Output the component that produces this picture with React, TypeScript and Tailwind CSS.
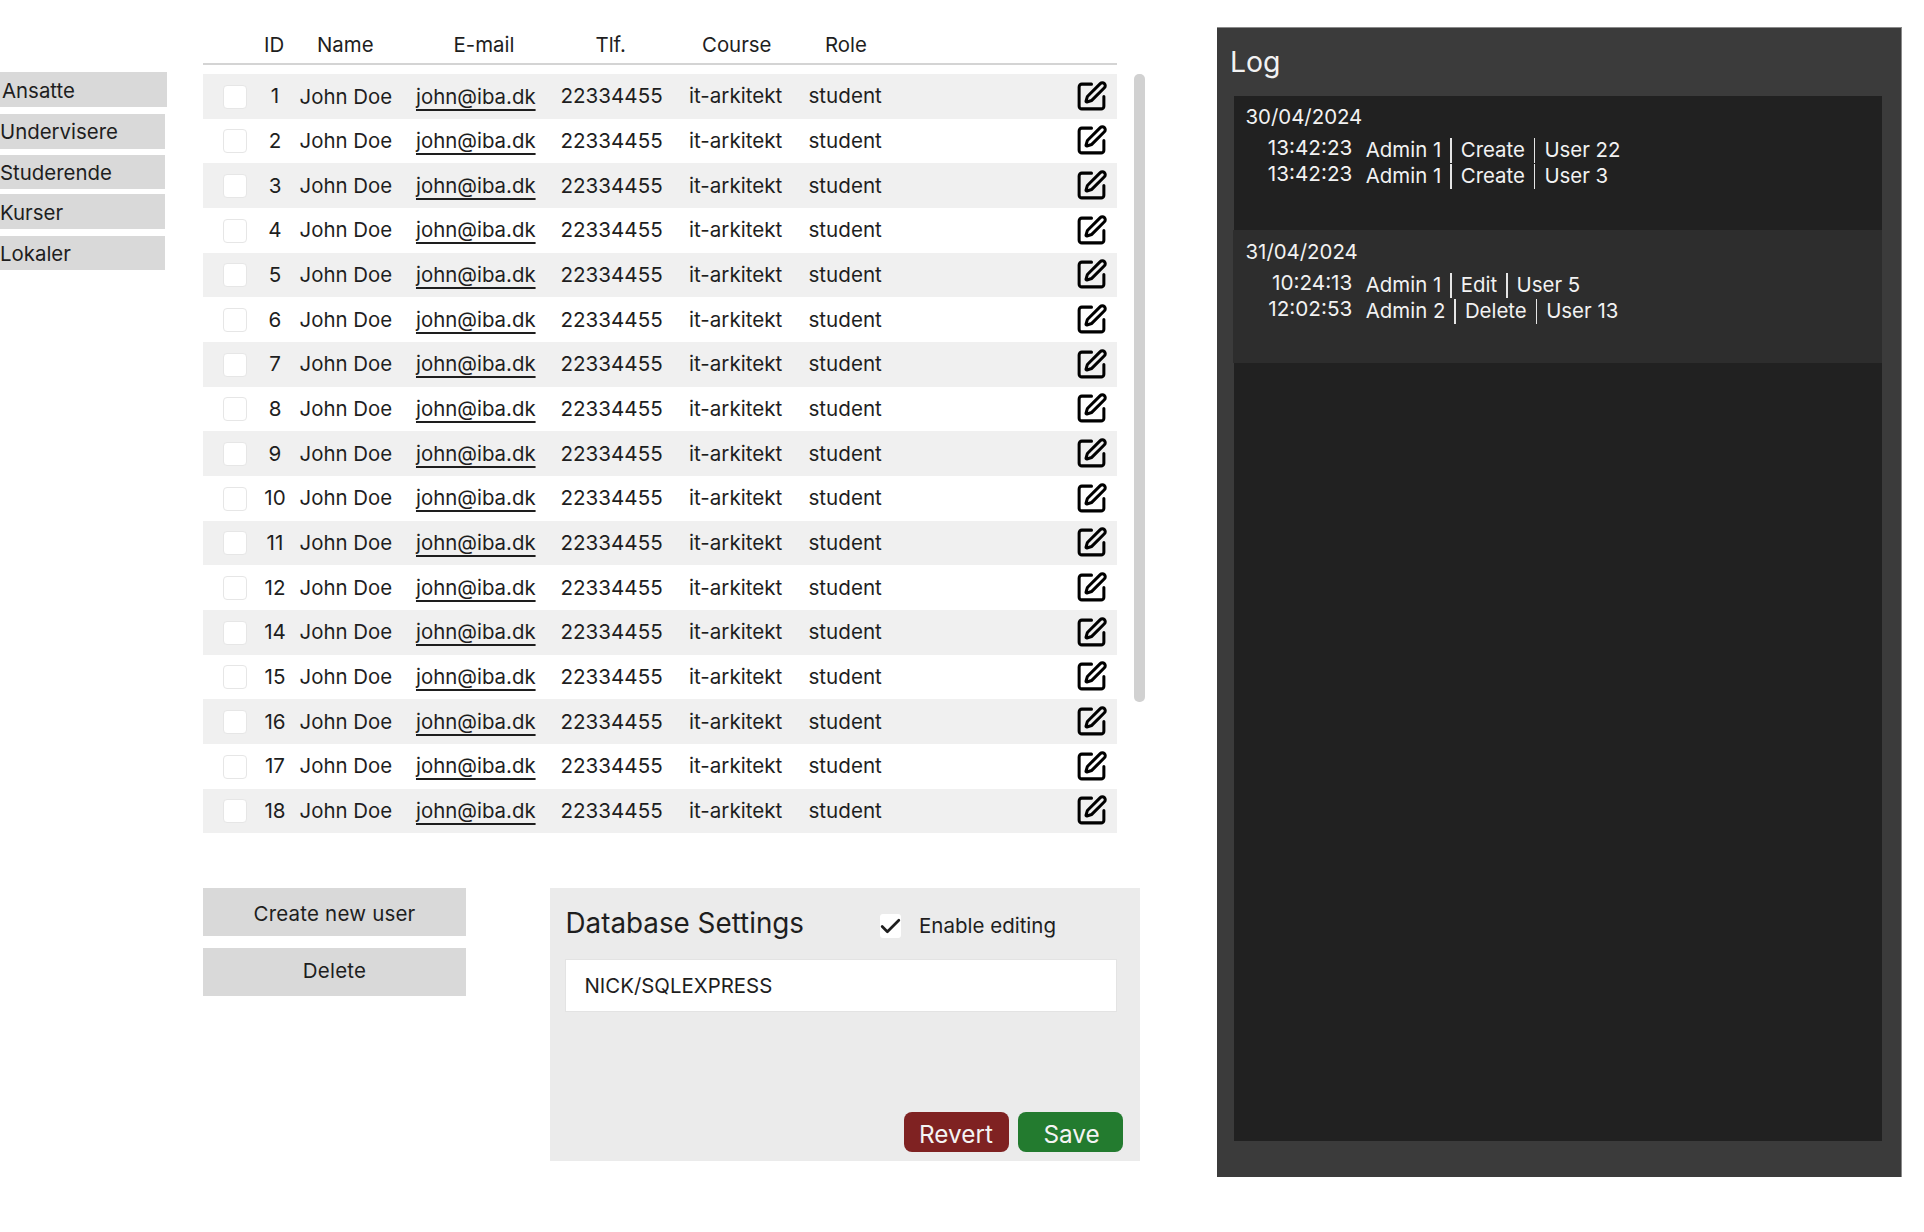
import { Check, SquarePen } from 'lucide-react';

const ids = [1, 2, 3, 4, 5, 6, 7, 8, 9, 10, 11, 12, 14, 15, 16, 17, 18];

const navItems = [
  { label: 'Ansatte', cls: 'w-[166.5px] h-[35px] mb-[6.5px] pl-[2px]' },
  { label: 'Undervisere', cls: 'w-[165px] h-[35px] mb-[6.5px]' },
  { label: 'Studerende', cls: 'w-[165px] h-[34px] mb-[5px]' },
  { label: 'Kurser', cls: 'w-[165px] h-[35px] mb-[7px]' },
  { label: 'Lokaler', cls: 'w-[165px] h-[34px]' },
];

const logGroups = [
  {
    date: '30/04/2024',
    bg: 'bg-[#212121] h-[134px] pl-[11.5px] pt-[7px]',
    rows: [
      { time: '13:42:23', who: 'Admin 1', action: 'Create', target: 'User 22' },
      { time: '13:42:23', who: 'Admin 1', action: 'Create', target: 'User 3' },
    ],
  },
  {
    date: '31/04/2024',
    bg: 'bg-[#2d2d2d] h-[133px] -ml-[1.5px] pl-[13px] pt-[8px]',
    rows: [
      { time: '10:24:13', who: 'Admin 1', action: 'Edit', target: 'User 5' },
      { time: '12:02:53', who: 'Admin 2', action: 'Delete', target: 'User 13' },
    ],
  },
];

function UserRow({ id, odd }: { id: number; odd: boolean }) {
  return (
    <div
      className={`grid h-[44.67px] grid-cols-[52px_44.6px_116.4px_145px_128px_120px_1fr] items-center text-[20.6px] text-[#1e1e1e] ${
        odd ? 'bg-[#f0f0f0]' : 'bg-white'
      }`}
    >
      <div className="pl-[20px]">
        <div className="mt-[1px] h-[24px] w-[24px] rounded-[4px] border border-[#e6e6e6] bg-white" />
      </div>
      <div className="pr-[4.6px] pt-[1px] text-center">{id}</div>
      <div className="pt-[1px] text-[20.4px]">John Doe</div>
      <div className="pt-[1px] text-[20.4px]">
        <span className="underline decoration-[1.5px] underline-offset-[5px] [text-decoration-skip-ink:none]">
          john@iba.dk
        </span>
      </div>
      <div className="-ml-[0.5px] pt-[1px]">22334455</div>
      <div className="pt-[1px]">it-arkitekt</div>
      <div className="flex items-center justify-between">
        <span className="-ml-[0.5px] pt-[1px]">student</span>
        <SquarePen size={33} strokeWidth={2.2} className="mr-[9px] text-black" />
      </div>
    </div>
  );
}

function LogRow({ time, who, action, target }: { time: string; who: string; action: string; target: string }) {
  return (
    <div className="flex h-[26px] items-center text-[20.4px] leading-none text-[#f2f2f2]">
      <span className="mb-[4px] w-[106.8px] text-right text-[20.7px]">{time}</span>
      <span className="ml-[13.5px]">{who}</span>
      <span className="mx-[9px] h-[25px] w-[1.5px] bg-[#e5e5e5]" />
      <span>{action}</span>
      <span className="mx-[9px] h-[25px] w-[1.5px] bg-[#e5e5e5]" />
      <span>{target}</span>
    </div>
  );
}

export default function App() {
  return (
    <div className="flex h-[1232px] w-[1924px] items-start bg-white font-['Inter',sans-serif]">
      {/* Sidebar */}
      <nav className="mt-[72px] w-[203px] shrink-0">
        {navItems.map((item) => (
          <div
            key={item.label}
            className={`flex items-center bg-[#d9d9d9] pt-[3px] text-[20.4px] text-[#1e1e1e] ${item.cls}`}
          >
            {item.label}
          </div>
        ))}
      </nav>

      {/* Main */}
      <main className="w-[950px] shrink-0">
        <div className="h-[65px] w-[914.4px] border-b-2 border-[#d4d4d4] text-[20.4px] text-[#1e1e1e]">
          <div className="grid grid-cols-[53px_136.5px_142px_106.5px_123px_1fr] pl-[61px] pt-[31px] leading-[28px]">
            <span>ID</span>
            <span>Name</span>
            <span>E-mail</span>
            <span>Tlf.</span>
            <span>Course</span>
            <span>Role</span>
          </div>
        </div>

        {/* User list + scrollbar */}
        <div className="mt-[9px] flex items-start">
          <div className="w-[914.4px] shrink-0">
            {ids.map((id, i) => (
              <UserRow key={id} id={id} odd={i % 2 === 0} />
            ))}
          </div>
          <div className="ml-[17px] h-[628px] w-[10.5px] shrink-0 rounded-[5px] bg-[#d1d1d1]" />
        </div>

        {/* Actions and settings */}
        <div className="mt-[55px] flex items-start">
          <div className="w-[347px] shrink-0">
            <button className="block h-[48px] w-[263px] bg-[#d9d9d9] pt-[5px] text-[20.5px] tracking-[0.2px] text-[#1e1e1e]">
              Create new user
            </button>
            <button className="mt-[12px] block h-[48px] w-[263px] bg-[#d9d9d9] pb-[1px] text-[20.5px] tracking-[0.2px] text-[#1e1e1e]">
              Delete
            </button>
          </div>

          <section className="flex h-[273px] w-[590px] flex-col bg-[#ebebeb] pl-[15px] pr-[17px] text-[#1e1e1e]">
            <div className="flex h-[71px] items-center">
              <h2 className="w-[315px] pl-[0.5px] text-[27.8px] font-normal">Database Settings</h2>
              <div className="mt-[5px] flex h-[24px] w-[21px] items-center justify-center rounded-[3px] bg-white">
                <Check size={25} strokeWidth={2.6} className="shrink-0 text-[#1e1e1e]" />
              </div>
              <span className="ml-[18px] pt-[5px] text-[20.5px]">Enable editing</span>
            </div>
            <div className="flex h-[53px] w-[552px] items-center border border-[#e3e3e3] bg-white pl-[18.5px] pt-[1px] text-[20.4px]">
              NICK/SQLEXPRESS
            </div>
            <div className="mt-[100px] flex justify-end gap-[9px] pr-[0.5px]">
              <button className="h-[40px] w-[105px] rounded-[8px] bg-[#7f2222] pt-[4px] text-[24.3px] text-[#f4f4f4]">
                Revert
              </button>
              <button className="h-[40px] w-[105px] rounded-[8px] bg-[#237b2f] pl-[3px] pt-[4px] text-[24.3px] text-[#f4f4f4]">
                Save
              </button>
            </div>
          </section>
        </div>
      </main>

      {/* Log */}
      <aside className="ml-[64px] mt-[27px] h-[1150px] w-[685px] shrink-0 border-t border-r border-[#8a8a8a] bg-[#3b3b3b] pl-[17px]">
        <h2 className="h-[68px] pt-[16px] text-[28.4px] leading-[36px] font-normal text-[#f2f2f2]">
          <span className="-ml-[4px]">Log</span>
        </h2>
        <div className="h-[1045px] w-[648px] bg-[#212121]">
          {logGroups.map((group) => (
            <div key={group.date} className={group.bg}>
              <div className="h-[34px] text-[20.4px] leading-[28px] text-[#f2f2f2]">{group.date}</div>
              {group.rows.map((row, i) => (
                <LogRow key={i} {...row} />
              ))}
            </div>
          ))}
        </div>
      </aside>
    </div>
  );
}
